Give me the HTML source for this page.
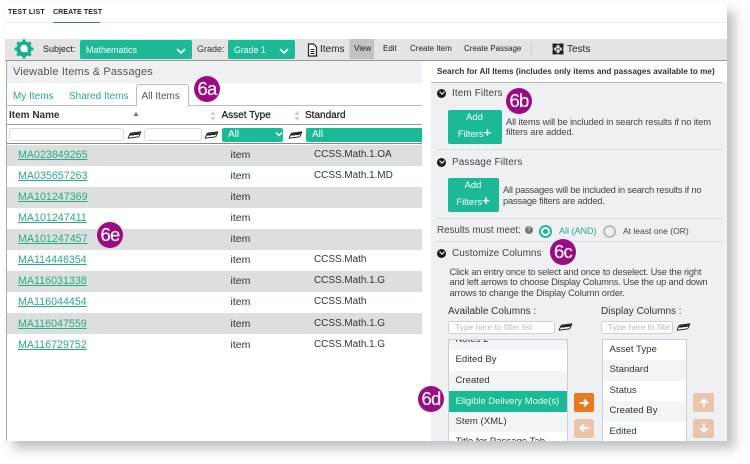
<!DOCTYPE html>
<html><head><meta charset="utf-8"><style>
html,body{margin:0;padding:0;background:#fff}
#p{position:relative;width:750px;height:464px;overflow:hidden;background:#fff;font-family:"Liberation Sans",sans-serif;color:#333}
#p div,#p a{position:absolute;white-space:nowrap;box-sizing:border-box}
.c{font-size:10.5px;line-height:14px;color:#333}
.s{font-size:10px;line-height:14px;color:#333;letter-spacing:-.05px}
.l{left:18px;width:70px;color:#2aa88a;text-decoration:underline;font-size:10.7px;line-height:14px}
.r{left:7px;width:415px;height:21px;background:#dcdfe0}
.b{width:26px;height:26px;border-radius:50%;background:#9a0b84;color:#fff;font-size:18.5px;line-height:25px;text-align:center;letter-spacing:-.8px;-webkit-text-stroke:.15px #fff}
.g{background:#1bb996;border-radius:2px;color:#fff}
.i{background:#fff;border:1px solid #d8dadc;border-radius:3px}
.o{width:9px;height:9px;border-radius:50%;background:#1c1c1c}
.o:after{content:"";position:absolute;left:2.6px;top:1.6px;width:3px;height:3px;border:solid #fff;border-width:0 1.3px 1.3px 0;transform:rotate(45deg)}
.d{height:0;border-top:1px dotted #c8ccd0}
.e{width:11px;height:6px;border:1px solid #222;background:linear-gradient(#222 55%,#fff 55%);transform:skewX(-30deg) rotate(-8deg);border-radius:1px}
.h{line-height:13px;color:#444;font-size:9.4px}
.tb{font-size:8px;line-height:12px;color:#222}
.li{height:20.5px;font-size:9.6px;line-height:20px;padding-left:7px;color:#333}
.f{font-size:10px;line-height:14px;color:#444;letter-spacing:.1px}
.hd{font-size:10px;line-height:14px;color:#222;-webkit-text-stroke:.25px #222}
.a{text-align:center;font-size:9.5px;line-height:14px;color:#fff}
</style></head><body><div id="p">

<div style="left:5px;top:3px;width:722px;height:438px;background:#fff;box-shadow:8px 8px 10px rgba(110,115,115,.42);overflow:hidden">
<div style="left:0;top:19px;width:722px;height:1px;background:#e9e9e9"></div>
<div style="left:3px;top:3px;font-size:7px;line-height:14px;font-weight:700;color:#222;letter-spacing:.2px">TEST LIST</div>
<div style="left:48px;top:3px;font-size:7px;line-height:14px;font-weight:700;color:#222;letter-spacing:.1px">CREATE TEST</div>
<div style="left:48px;top:18.5px;width:47px;height:1.5px;background:#3a6fc4"></div>

<div style="left:0;top:35.5px;width:722px;height:22.5px;background:#e4e4e4;border-bottom:1px solid #999"></div>
<svg style="position:absolute;left:9px;top:35.5px" width="20" height="20" viewBox="0 0 20 20"><g fill="#16ad8d"><circle cx="10" cy="10" r="7.6"/><g stroke="#16ad8d" stroke-width="3"><path d="M10 .5v19M.5 10h19M3.3 3.3l13.4 13.4M16.7 3.3L3.3 16.7"/></g></g><circle cx="10" cy="9.5" r="3.7" fill="#fff"/><path d="M11 12l3 1.5-1-3.5z" fill="#fff"/></svg>
<div style="left:38px;top:40px;font-size:9px;line-height:13px;color:#222">Subject:</div>
<div class="g" style="left:74.5px;top:36.5px;width:112px;height:19.5px"></div>
<div style="left:81px;top:40.5px;font-size:9px;line-height:12px;color:#fff">Mathematics</div>
<svg style="position:absolute;left:170px;top:43.5px" width="12" height="8"><path d="M2 2l4 4 4-4" fill="none" stroke="#fff" stroke-width="1.6"/></svg>
<div style="left:192px;top:40px;font-size:9px;line-height:13px;color:#333">Grade:</div>
<div class="g" style="left:223px;top:36.5px;width:67px;height:19.5px"></div>
<div style="left:229px;top:40.5px;font-size:8.8px;line-height:12px;color:#fff">Grade 1</div>
<svg style="position:absolute;left:273px;top:43.5px" width="12" height="8"><path d="M2 2l4 4 4-4" fill="none" stroke="#fff" stroke-width="1.6"/></svg>
<svg style="position:absolute;left:302px;top:40px" width="11" height="14"><path d="M1.5 1h5l3 3v9h-8z" fill="#fff" stroke="#222" stroke-width="1.2"/><path d="M3.5 6.5h4M3.5 8.5h4M3.5 10.5h4" stroke="#222"/></svg>
<div style="left:315px;top:39.5px;font-size:10px;line-height:14px;color:#222">Items</div>
<div style="left:344px;top:36px;width:1px;height:19px;background:#d0d0d0"></div>
<div style="left:345px;top:36px;width:24px;height:20px;background:#c3c3c3"></div>
<div class="tb" style="left:349px;top:39.5px">View</div>
<div class="tb" style="left:378px;top:39.5px">Edit</div>
<div class="tb" style="left:405px;top:39.5px">Create Item</div>
<div class="tb" style="left:459px;top:39.5px">Create Passage</div>
<div style="left:526px;top:39px;width:1px;height:14px;background:#d0d0d0"></div>
<svg style="position:absolute;left:547px;top:40px" width="12" height="12"><rect x="1.5" y="1.5" width="9" height="9" fill="none" stroke="#222" stroke-width="1.4"/><path d="M1 1h3v3H1zM8 1h3v3H8zM1 8h3v3H1zM8 8h3v3H8zM4 6h4" fill="#222" stroke="#222"/></svg>
<div style="left:562px;top:39.5px;font-size:10px;line-height:14px;color:#222">Tests</div>

<div style="left:.5px;top:58px;width:1.5px;height:380px;background:#a8a8a8"></div>
<div style="left:2px;top:58px;width:415px;height:22px;background:#eff0f4"></div>
<div style="left:8px;top:62px;font-size:11px;line-height:15px;color:#555;letter-spacing:.15px">Viewable Items &amp; Passages</div>
<div style="left:8px;top:87px;font-size:10px;line-height:14px;color:#2aa88a">My Items</div>
<div style="left:64px;top:87px;font-size:10px;line-height:14px;color:#2aa88a">Shared Items</div>
<div style="left:2px;top:102px;width:415px;height:1px;background:#bbb"></div>
<div style="left:130.5px;top:81px;width:53px;height:22px;background:#fff;border:1px solid #bbb;border-bottom:none;border-radius:3px 3px 0 0"></div>
<div style="left:136.5px;top:87px;font-size:10px;line-height:14px;color:#555">All Items</div>
<div style="left:4px;top:106px;font-size:10px;line-height:14px;font-weight:700;color:#333">Item Name</div>
<div class="hd" style="left:216.5px;top:106px">Asset Type</div>
<div class="hd" style="left:300px;top:106px">Standard</div>
<svg style="position:absolute;left:128px;top:108px" width="6" height="6"><path d="M3 1l2.5 4H.5z" fill="#6b63d6"/></svg>
<svg style="position:absolute;left:205px;top:108px" width="6" height="10"><path d="M3 0l2.5 4H.5zM3 10l2.5-4H.5z" fill="#ccc"/></svg>
<svg style="position:absolute;left:288.5px;top:108px" width="6" height="10"><path d="M3 0l2.5 4H.5zM3 10l2.5-4H.5z" fill="#ccc"/></svg>
<div style="left:2px;top:121px;width:415px;height:1px;background:#999"></div>
<div class="i" style="left:4px;top:125px;width:115px;height:13px"></div>
<div class="e" style="left:124px;top:128.5px"></div>
<div class="i" style="left:139px;top:125px;width:58px;height:13px"></div>
<div class="e" style="left:201px;top:128.5px"></div>
<div class="g" style="left:217px;top:124.5px;width:61px;height:14px"></div>
<div style="left:223px;top:125px;font-size:10px;line-height:14px;color:#fff">All</div>
<svg style="position:absolute;left:269px;top:128px" width="10" height="7"><path d="M2 1.5l3 3 3-3" fill="none" stroke="#fff" stroke-width="1.4"/></svg>
<div class="e" style="left:285px;top:128.5px"></div>
<div class="g" style="left:300.5px;top:124.5px;width:116.5px;height:14px;border-radius:2px 0 0 2px"></div>
<div style="left:307px;top:125px;font-size:10px;line-height:14px;color:#fff">All</div>
<div style="left:2px;top:140px;width:415px;height:1px;background:#888"></div>
</div>

<div class="r" style="top:145px"></div>
<div class="r" style="top:187px"></div>
<div class="r" style="top:229px"></div>
<div class="r" style="top:271px"></div>
<div class="r" style="top:313px"></div>

<a class="l" style="top:147.5px">MA023849265</a><div class="c" style="left:230.5px;top:147.5px">item</div><div class="s" style="left:314px;top:147.5px">CCSS.Math.1.OA</div>
<a class="l" style="top:168.5px">MA035657263</a><div class="c" style="left:230.5px;top:168.5px">item</div><div class="s" style="left:314px;top:168.5px">CCSS.Math.1.MD</div>
<a class="l" style="top:190px">MA101247369</a><div class="c" style="left:230.5px;top:190px">item</div>
<a class="l" style="top:211px">MA101247411</a><div class="c" style="left:230.5px;top:211px">item</div>
<a class="l" style="top:232px">MA101247457</a><div class="c" style="left:230.5px;top:232px">item</div>
<a class="l" style="top:253px">MA114446354</a><div class="c" style="left:230.5px;top:253px">item</div><div class="s" style="left:314px;top:253px">CCSS.Math</div>
<a class="l" style="top:274px">MA116031338</a><div class="c" style="left:230.5px;top:274px">item</div><div class="s" style="left:314px;top:274px">CCSS.Math.1.G</div>
<a class="l" style="top:295px">MA116044454</a><div class="c" style="left:230.5px;top:295px">item</div><div class="s" style="left:314px;top:295px">CCSS.Math</div>
<a class="l" style="top:316.5px">MA116047559</a><div class="c" style="left:230.5px;top:316.5px">item</div><div class="s" style="left:314px;top:316.5px">CCSS.Math.1.G</div>
<a class="l" style="top:337.5px">MA116729752</a><div class="c" style="left:230.5px;top:337.5px">item</div><div class="s" style="left:314px;top:337.5px">CCSS.Math.1.G</div>

<div style="left:431px;top:63px;width:296px;height:378px;background:#eff0f4;overflow:hidden">
<div style="left:0;top:0;width:296px;height:19px;background:#fff"></div>
<div style="left:0;top:19px;width:291px;height:1px;background:#b5b8b8"></div>
<div style="left:6px;top:2px;font-size:8.2px;line-height:14px;color:#333;font-weight:700">Search for All Items (includes only items and passages available to me)</div>
<div class="o" style="left:6px;top:25.5px"></div>
<div class="f" style="left:21px;top:23.5px">Item Filters</div>
<div class="g" style="left:16.5px;top:46.5px;width:54px;height:34px"></div>
<div class="a" style="left:16.5px;top:48px;width:54px">Add</div>
<div class="a" style="left:16.5px;top:64.5px;width:54px">Filters<b style="font-size:13px;line-height:10px">+</b></div>
<div class="h" style="left:75px;top:51.5px;letter-spacing:-.15px">All items will be included in search results if no item</div>
<div class="h" style="left:75px;top:62px;letter-spacing:-.1px">filters are added.</div>
<div class="d" style="left:6px;top:86px;width:285px"></div>
<div class="o" style="left:6px;top:94.5px"></div>
<div class="f" style="left:21px;top:92.5px">Passage Filters</div>
<div class="g" style="left:16.5px;top:115px;width:51px;height:34px"></div>
<div class="a" style="left:16.5px;top:116px;width:51px">Add</div>
<div class="a" style="left:16.5px;top:132.5px;width:51px">Filters<b style="font-size:13px;line-height:10px">+</b></div>
<div class="h" style="left:72px;top:120px;letter-spacing:-.23px">All passages will be included in search results if no</div>
<div class="h" style="left:72px;top:130.5px;letter-spacing:-.24px">passage filters are added.</div>
<div class="d" style="left:6px;top:154.5px;width:285px"></div>
<div style="left:6px;top:160.5px;font-size:9.8px;line-height:14px;color:#444">Results must meet:</div>
<div style="left:94px;top:163px;width:8px;height:8px;border-radius:50%;background:#777;color:#fff;font-size:6px;line-height:8px;text-align:center">?</div>
<div style="left:107.5px;top:161.5px;width:13.4px;height:13.4px;border-radius:50%;border:2.4px solid #1bb996;background:#fff"></div>
<div style="left:111.7px;top:165.7px;width:5px;height:5px;border-radius:50%;background:#1bb996"></div>
<div style="left:128px;top:161.5px;font-size:9px;line-height:13px;color:#2aa88a">All (AND)</div>
<div style="left:171.7px;top:161.5px;width:13.4px;height:13.4px;border-radius:50%;border:2.4px solid #b8bcbc;background:#eff0f4"></div>
<div style="left:192px;top:161.5px;font-size:8.5px;line-height:13px;color:#444">At least one (OR)</div>
<div class="d" style="left:6px;top:177.5px;width:285px"></div>
<div class="o" style="left:6px;top:185.5px"></div>
<div style="left:21px;top:184px;font-size:10px;line-height:14px;color:#444">Customize Columns</div>
<div class="h" style="left:18.5px;top:201.5px;letter-spacing:-.2px">Click an entry once to select and once to deselect. Use the right</div>
<div class="h" style="left:18.5px;top:212px;letter-spacing:-.22px">and left arrows to choose Display Columns. Use the up and down</div>
<div class="h" style="left:18.5px;top:222.5px;letter-spacing:-.17px">arrows to change the Display Column order.</div>

<div style="left:17px;top:242px;font-size:10px;line-height:14px;color:#333">Available Columns :</div>
<div style="left:170px;top:242px;font-size:10px;line-height:14px;color:#333">Display Columns :</div>
<div class="i" style="left:16.5px;top:257.5px;width:107px;height:13px;border-color:#ccd0d4"></div>
<div style="left:24px;top:257.5px;font-size:8.4px;line-height:13px;color:#b5bcc4">Type here to filter list</div>
<div class="e" style="left:129px;top:261px"></div>
<div class="i" style="left:169.5px;top:257.5px;width:72px;height:13px;border-color:#ccd0d4"></div>
<div style="left:177px;top:257.5px;width:62px;overflow:hidden;font-size:8.4px;line-height:13px;color:#b5bcc4">Type here to filter list</div>
<div class="e" style="left:247px;top:261px"></div>

<div style="left:16.5px;top:275.5px;width:120.5px;height:110px;background:#fff;border:1px solid #ccd0d4;overflow:hidden">
<div class="li" style="left:0;top:-10px;width:119px;background:#f2f5f6">Notes 2</div>
<div class="li" style="left:0;top:10.5px;width:119px">Edited By</div>
<div class="li" style="left:0;top:31px;width:119px;background:#f2f5f6">Created</div>
<div class="li" style="left:0;top:51.5px;width:119px;background:#1bb996;color:#e8fff8;font-size:9.4px">Eligible Delivery Mode(s)</div>
<div class="li" style="left:0;top:72px;width:119px;background:#f2f5f6">Stem (XML)</div>
<div class="li" style="left:0;top:92.5px;width:119px">Title for Passage Tab</div>
</div>
<div style="left:170.5px;top:275.5px;width:85px;height:110px;background:#fff;border:1px solid #ccd0d4;overflow:hidden">
<div class="li" style="left:0;top:0;width:83px">Asset Type</div>
<div class="li" style="left:0;top:20.5px;width:83px;background:#f2f5f6">Standard</div>
<div class="li" style="left:0;top:41px;width:83px">Status</div>
<div class="li" style="left:0;top:61.5px;width:83px;background:#f2f5f6">Created By</div>
<div class="li" style="left:0;top:82px;width:83px">Edited</div>
</div>
<div style="left:143px;top:330px;width:20px;height:19px;background:#e8791c;border-radius:2px"></div>
<svg style="position:absolute;left:147px;top:334px" width="12" height="12"><path d="M1.5 6h8M6 2.5L9.5 6 6 9.5" fill="none" stroke="#fff" stroke-width="2"/></svg>
<div style="left:143px;top:355.5px;width:20px;height:19px;background:#ebc5ab;border-radius:2px"></div>
<svg style="position:absolute;left:147px;top:359px" width="12" height="12"><path d="M10.5 6h-8M6 2.5L2.5 6 6 9.5" fill="none" stroke="#fff" stroke-width="1.8"/></svg>
<div style="left:262px;top:330px;width:21px;height:19px;background:#ebc5ab;border-radius:2px"></div>
<svg style="position:absolute;left:267px;top:333.5px" width="12" height="12"><path d="M6 10.5v-8M2.5 6L6 2.5 9.5 6" fill="none" stroke="#fff" stroke-width="1.8"/></svg>
<div style="left:262px;top:355.5px;width:21px;height:19px;background:#ebc5ab;border-radius:2px"></div>
<svg style="position:absolute;left:267px;top:359px" width="12" height="12"><path d="M6 1.5v8M2.5 6L6 9.5 9.5 6" fill="none" stroke="#fff" stroke-width="1.8"/></svg>
</div>

<div class="b" style="left:194px;top:75.5px">6a</div>
<div class="b" style="left:506px;top:88px">6b</div>
<div class="b" style="left:550px;top:239px">6c</div>
<div class="b" style="left:418px;top:386px">6d</div>
<div class="b" style="left:97px;top:221.5px">6e</div>
</div></body></html>
